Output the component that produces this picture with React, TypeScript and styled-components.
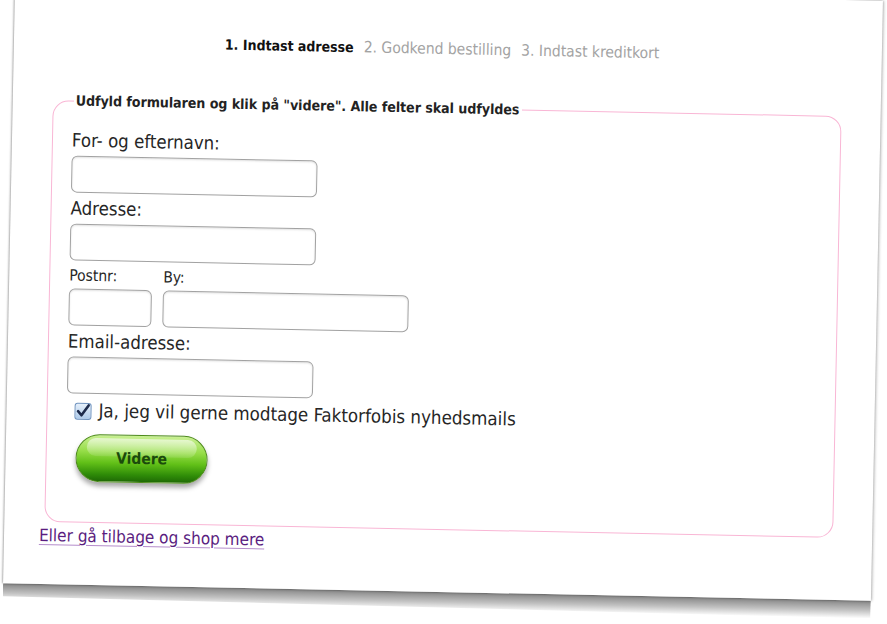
import React from "react";
import styled, { createGlobalStyle } from "styled-components";

const GlobalStyle = createGlobalStyle`
  html, body {
    margin: 0;
    padding: 0;
    background: #fff;
    overflow: hidden;
  }
  body {
    font-family: "DejaVu Sans Condensed", "DejaVu Sans", sans-serif;
    font-stretch: condensed;
  }
`;

const Stage = styled.div`
  width: 887px;
  height: 624px;
  overflow: hidden;
  padding-left: 9px;
  box-sizing: border-box;
`;

const Paper = styled.div`
  position: relative;
  width: 868px;
  height: 600px;
  margin-top: -8px;
  box-sizing: border-box;
  background: #fff;
  transform: rotate(1.15deg);
  transform-origin: 434px 300px;
  box-shadow: -1px 0 2px rgba(0, 0, 0, 0.28), 1px 0 3px rgba(0, 0, 0, 0.3);
  padding-top: 48px;

  &::after {
    content: "";
    position: absolute;
    left: 0;
    right: 0;
    top: 100%;
    height: 18px;
    background: linear-gradient(
      to bottom,
      rgba(0, 0, 0, 0.48),
      rgba(0, 0, 0, 0.24) 55%,
      rgba(0, 0, 0, 0)
    );
    clip-path: polygon(0 0, 100% 0, 100% 100%, 0 72%);
  }
`;

const Steps = styled.div`
  display: flex;
  align-items: baseline;
  gap: 10px;
  padding-left: 211px;
  line-height: 18px;
`;

const Step = styled.span<{ $active?: boolean }>`
  color: ${(p) => (p.$active ? "#111" : "#a3a3a3")};
  font-weight: ${(p) => (p.$active ? "bold" : "normal")};
  font-size: ${(p) => (p.$active ? "14px" : "15.5px")};
`;

const Fieldset = styled.fieldset`
  width: 789px;
  box-sizing: border-box;
  margin: 42px 0 0 40px;
  padding: 16px 18px 40px 19px;
  border: 1px solid #f9b6d5;
  border-radius: 16px;
  display: flex;
  flex-direction: column;
  align-items: flex-start;
`;

const Legend = styled.legend`
  margin-left: 1px;
  padding: 0 2px;
  font-size: 14px;
  font-weight: bold;
  color: #222;
`;

const Label = styled.label<{ $small?: boolean }>`
  display: block;
  color: #262626;
  font-size: ${(p) => (p.$small ? "15.5px" : "18.5px")};
  line-height: ${(p) => (p.$small ? "17px" : "22px")};
  margin: ${(p) => (p.$small ? "7px 0 4px" : "5px 0 4px")};
`;

const Input = styled.input<{ $w?: number }>`
  display: block;
  width: ${(p) => p.$w ?? 246}px;
  height: 37px;
  box-sizing: border-box;
  border: 1px solid #a2a2a2;
  border-radius: 6px;
  background: #fff;
  box-shadow: inset 0 1px 2px rgba(0, 0, 0, 0.12);
  font: inherit;
  outline: none;
`;

const Row = styled.div`
  display: flex;
  gap: 11px;
`;

const Col = styled.div`
  display: flex;
  flex-direction: column;
`;

const CheckRow = styled.label`
  display: flex;
  align-items: center;
  gap: 7px;
  margin: 6px 0 0 8px;
  font-size: 18.6px;
  line-height: 22px;
  color: #262626;
`;

const CheckBox = styled.span`
  width: 17px;
  height: 17px;
  box-sizing: border-box;
  border: 1px solid #6f93bf;
  border-radius: 3px;
  background: linear-gradient(to bottom, #e6f0fb, #aecbeb);
  display: flex;
  align-items: center;
  justify-content: center;
`;

const Button = styled.button`
  position: relative;
  width: 132px;
  height: 48px;
  margin: 12px 0 0 10px;
  border: 1px solid #4d8a1c;
  border-radius: 24px;
  background: linear-gradient(
    to bottom,
    #c9f093 0%,
    #96dd48 35%,
    #62c018 60%,
    #2f8c08 85%,
    #1f6a05 100%
  );
  box-shadow: 0 4px 5px rgba(0, 0, 0, 0.35);
  font-family: inherit;
  font-stretch: condensed;
  font-size: 15.5px;
  font-weight: bold;
  color: #1b4a0c;
  cursor: pointer;
  overflow: hidden;

  &::before {
    content: "";
    position: absolute;
    left: 10px;
    right: 10px;
    top: 3px;
    height: 18px;
    border-radius: 12px;
    background: linear-gradient(
      to bottom,
      rgba(255, 255, 255, 0.6),
      rgba(255, 255, 255, 0.1)
    );
  }
`;

const ButtonText = styled.span`
  position: relative;
`;

const BackLink = styled.a`
  display: inline-block;
  margin: 3px 0 0 35px;
  color: #5a1d80;
  font-size: 17px;
  text-decoration: underline;
  text-decoration-color: #b48ccb;
  text-underline-offset: 3px;
`;

export default function App() {
  return (
    <>
      <GlobalStyle />
      <Stage>
        <Paper>
          <Steps>
            <Step $active>1. Indtast adresse</Step>
            <Step>2. Godkend bestilling</Step>
            <Step>3. Indtast kreditkort</Step>
          </Steps>
          <Fieldset>
            <Legend>Udfyld formularen og klik på "videre". Alle felter skal udfyldes</Legend>
            <Label>For- og efternavn:</Label>
            <Input />
            <Label>Adresse:</Label>
            <Input />
            <Row>
              <Col>
                <Label $small>Postnr:</Label>
                <Input $w={83} />
              </Col>
              <Col>
                <Label $small>By:</Label>
                <Input />
              </Col>
            </Row>
            <Label>Email-adresse:</Label>
            <Input />
            <CheckRow>
              <CheckBox>
                <svg width="15" height="15" viewBox="0 0 15 15">
                  <path
                    d="M2.5 7.5 L6 11.5 L13 1.5"
                    fill="none"
                    stroke="#1d2b4c"
                    strokeWidth="2.6"
                    strokeLinecap="round"
                    strokeLinejoin="round"
                  />
                </svg>
              </CheckBox>
              Ja, jeg vil gerne modtage Faktorfobis nyhedsmails
            </CheckRow>
            <Button>
              <ButtonText>Videre</ButtonText>
            </Button>
          </Fieldset>
          <BackLink href="#">Eller gå tilbage og shop mere</BackLink>
        </Paper>
      </Stage>
    </>
  );
}
